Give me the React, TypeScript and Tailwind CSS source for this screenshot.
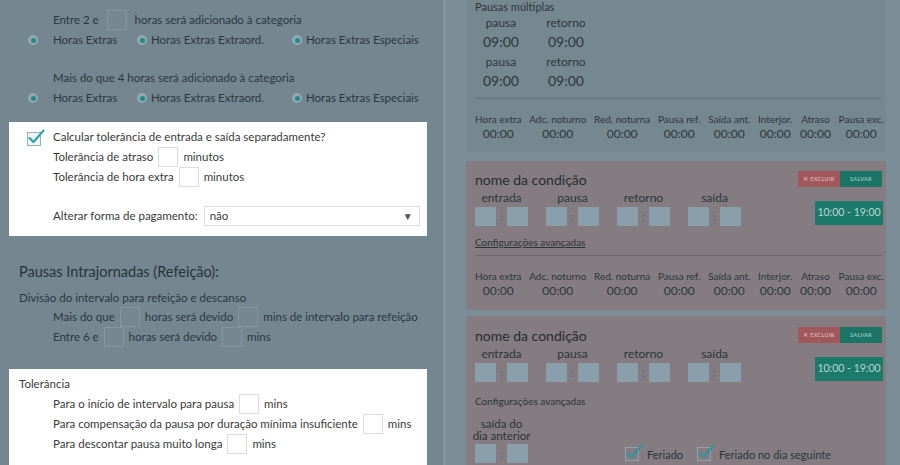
import React from "react";

function Radio() {
  return (
    <span className="flex h-[10px] w-[10px] shrink-0 items-center justify-center rounded-full bg-[#93a9b2]">
      <span className="h-[5px] w-[5px] rounded-full bg-[#1f8a8e]" />
    </span>
  );
}

function Check({ box, tick, fill }: { box: string; tick: string; fill: string }) {
  return (
    <svg width="18" height="17" viewBox="0 0 18 17" className="shrink-0">
      <rect x="0.5" y="3.5" width="13" height="13" fill={fill} stroke={box} />
      <path d="M2.5 9 L6.5 13 L16.5 1.5" fill="none" stroke={tick} strokeWidth="2" strokeLinecap="round" strokeLinejoin="round" />
    </svg>
  );
}

function DarkBox() {
  return <span className="inline-block h-[20px] w-[20px] shrink-0 border border-[#8696a0]" />;
}

function WhiteBox() {
  return <span className="inline-block h-[20px] w-[20px] shrink-0 border border-[#dcdcdc]" />;
}

function RadioRow() {
  return (
    <div className="flex h-[20px] items-center pl-[28px]">
      <div className="flex w-[109px] items-center gap-[15px]">
        <Radio />
        <span>Horas Extras</span>
      </div>
      <div className="flex w-[155px] items-center gap-[4px]">
        <Radio />
        <span>Horas Extras Extraord.</span>
      </div>
      <div className="flex items-center gap-[4px]">
        <Radio />
        <span>Horas Extras Especiais</span>
      </div>
    </div>
  );
}

const stats = ["Hora extra", "Adc. noturno", "Red. noturna", "Pausa ref.", "Saída ant.", "Interjor.", "Atraso", "Pausa exc."];

function Stats() {
  return (
    <div className="flex justify-between text-[#2b373c]">
      {stats.map((s) => (
        <div key={s} className="flex flex-col items-center">
          <span className="text-[10px] leading-[14px]">{s}</span>
          <span className="text-[12px] leading-[16px]">00:00</span>
        </div>
      ))}
    </div>
  );
}

function TimePair() {
  return (
    <div className="flex w-[53px] items-center justify-between">
      <span className="h-[19px] w-[21px] bg-[#89a0ac]" />
      <span className="text-[11px] font-bold leading-none text-[#5a6e78]">:</span>
      <span className="h-[19px] w-[21px] bg-[#89a0ac]" />
    </div>
  );
}

function CondTop() {
  const labels = ["entrada", "pausa", "retorno", "saída"];
  return (
    <>
      <div className="flex h-[20px] items-center justify-between pr-[2px]">
        <span className="text-[14px] text-[#262c30]">nome da condição</span>
        <div className="flex h-[16px]">
          <span className="flex w-[42px] items-center justify-center bg-[#a0585c] text-[5.5px] font-bold tracking-[0.3px] text-[#d9aeb0]">✕ EXCLUIR</span>
          <span className="flex w-[42px] items-center justify-center bg-[#1b7566] text-[5.5px] font-bold tracking-[0.3px] text-[#8fc2b8]">SALVAR</span>
        </div>
      </div>
      <div className="flex items-end justify-between pr-[1px]">
        <div className="flex flex-col">
          <div className="flex h-[17px] gap-[18px] text-[12px] leading-[17px] text-[#2d3438]">
            {labels.map((l) => (
              <span key={l} className="w-[53px] text-center">{l}</span>
            ))}
          </div>
          <div className="mt-[1px] flex gap-[18px]">
            {labels.map((l) => (
              <TimePair key={l} />
            ))}
          </div>
        </div>
        <span className="mb-[1px] flex h-[24px] w-[68px] items-center justify-center bg-[#1c7a6b] text-[10.5px] text-[#b8d6d1]">10:00 - 19:00</span>
      </div>
    </>
  );
}

export default function App() {
  return (
    <div className="flex h-[465px] w-[900px] overflow-hidden font-['Lato',sans-serif]">
      {/* Left column */}
      <div className="w-[443px] shrink-0 bg-[#74868f] pt-[10px] text-[11.5px] text-[#2b383e]">
        <div className="flex h-[20px] items-center gap-[8px] pl-[53px]">
          <span>Entre 2 e</span>
          <DarkBox />
          <span>horas será adicionado à categoria</span>
        </div>
        <RadioRow />
        <div className="mt-[18px] flex h-[20px] items-center pl-[53px]">
          <span>Mais do que 4 horas será adicionado à categoria</span>
        </div>
        <RadioRow />

        <div className="ml-[9px] mt-[14px] h-[114px] w-[418px] bg-white pt-[5px] text-[#3a3a3a]">
          <div className="flex h-[20px] items-center pl-[18px]">
            <Check box="#9ab3b8" tick="#2a9fa5" fill="#eef3f4" />
            <span className="ml-[8px]">Calcular tolerância de entrada e saída separadamente?</span>
          </div>
          <div className="flex h-[20px] items-center gap-[5px] pl-[44px]">
            <span>Tolerância de atraso</span>
            <WhiteBox />
            <span>minutos</span>
          </div>
          <div className="flex h-[20px] items-center gap-[5px] pl-[44px]">
            <span>Tolerância de hora extra</span>
            <WhiteBox />
            <span>minutos</span>
          </div>
          <div className="mt-[19px] flex h-[20px] items-center gap-[6px] pl-[44px]">
            <span>Alterar forma de pagamento:</span>
            <div className="flex h-[20px] w-[216px] items-center justify-between border border-[#dcdcdc] pl-[5px] pr-[6px]">
              <span>não</span>
              <span className="text-[10px] text-[#555]">▼</span>
            </div>
          </div>
        </div>

        <div className="mt-[24px] flex h-[24px] items-center pl-[19px] text-[14.5px] text-[#26343a]">
          Pausas Intrajornadas (Refeição):
        </div>
        <div className="mt-[6px] flex h-[16px] items-center pl-[19px]">
          Divisão do intervalo para refeição e descanso
        </div>
        <div className="mt-[1px] flex h-[20px] items-center gap-[5px] pl-[53px]">
          <span>Mais do que</span>
          <DarkBox />
          <span>horas será devido</span>
          <DarkBox />
          <span>mins de intervalo para refeição</span>
        </div>
        <div className="flex h-[20px] items-center gap-[5px] pl-[53px]">
          <span>Entre 6 e</span>
          <DarkBox />
          <span>horas será devido</span>
          <DarkBox />
          <span>mins</span>
        </div>

        <div className="ml-[9px] mt-[22px] h-[120px] w-[418px] bg-white pt-[6px] text-[#3a3a3a]">
          <div className="flex h-[18px] items-center pl-[10px]">Tolerância</div>
          <div className="mt-[1px] flex h-[20px] items-center gap-[5px] pl-[44px]">
            <span>Para o início de intervalo para pausa</span>
            <WhiteBox />
            <span>mins</span>
          </div>
          <div className="flex h-[20px] items-center gap-[5px] pl-[44px]">
            <span>Para compensação da pausa por duração mínima insuficiente</span>
            <WhiteBox />
            <span>mins</span>
          </div>
          <div className="flex h-[20px] items-center gap-[5px] pl-[44px]">
            <span>Para descontar pausa muito longa</span>
            <WhiteBox />
            <span>mins</span>
          </div>
        </div>
      </div>

      {/* Right column */}
      <div className="flex-1 border-l-[2px] border-[#8598a1] bg-[#7b8e98] pl-[21px] pr-[14px]">
        {/* Top card */}
        <div className="h-[152px] bg-[#75878f] pl-[9px] pr-[2px] text-[#2b373c]">
          <div className="flex h-[14px] items-center text-[11px]">Pausas múltiplas</div>
          <div className="mt-[2px] grid w-[117px] grid-cols-2 gap-x-[13px]">
            <span className="h-[14px] text-center text-[12px] leading-[14px]">pausa</span>
            <span className="h-[14px] text-center text-[12px] leading-[14px]">retorno</span>
            <span className="mt-[3px] h-[18px] text-center text-[14px] leading-[18px]">09:00</span>
            <span className="mt-[3px] h-[18px] text-center text-[14px] leading-[18px]">09:00</span>
            <span className="mt-[4px] h-[14px] text-center text-[12px] leading-[14px]">pausa</span>
            <span className="mt-[4px] h-[14px] text-center text-[12px] leading-[14px]">retorno</span>
            <span className="mt-[3px] h-[18px] text-center text-[14px] leading-[18px]">09:00</span>
            <span className="mt-[3px] h-[18px] text-center text-[14px] leading-[18px]">09:00</span>
          </div>
          <div className="mr-[2px] mt-[8px] h-[1px] bg-[#5f7079]" />
          <div className="mt-[13px]">
            <Stats />
          </div>
        </div>

        {/* Condition card 1 */}
        <div className="mt-[9px] h-[149px] bg-[#847c80] pl-[9px] pr-[2px] pt-[8px]">
          <CondTop />
          <div className="mt-[9px] flex h-[14px] items-center text-[10px] text-[#2d3438] underline">Configurações avançadas</div>
          <div className="mr-[2px] mt-[6px] h-[1px] bg-[#6a6469]" />
          <div className="mt-[13px]">
            <Stats />
          </div>
        </div>

        {/* Condition card 2 */}
        <div className="mt-[6px] h-[160px] bg-[#847c80] pl-[9px] pr-[2px] pt-[9px]">
          <CondTop />
          <div className="mt-[12px] flex h-[14px] items-center text-[10px] text-[#2d3438]">Configurações avançadas</div>
          <div className="mt-[10px] flex items-end">
            <div className="flex w-[53px] flex-col items-center text-[11.5px] text-[#2d3438]">
              <span className="h-[12px] leading-[12px]">saída do</span>
              <span className="h-[12px] whitespace-nowrap leading-[12px]">dia anterior</span>
              <div className="mt-[2px]">
                <TimePair />
              </div>
            </div>
            <div className="mb-[2px] ml-[97px] flex items-end gap-[4px] text-[11px] text-[#2d3438]">
              <Check box="#8ea5ad" tick="#2a95a0" fill="none" />
              <span className="leading-[13px]">Feriado</span>
              <span className="ml-[10px]"><Check box="#8ea5ad" tick="#2a95a0" fill="none" /></span>
              <span className="leading-[13px]">Feriado no dia seguinte</span>
            </div>
          </div>
        </div>
      </div>
    </div>
  );
}
